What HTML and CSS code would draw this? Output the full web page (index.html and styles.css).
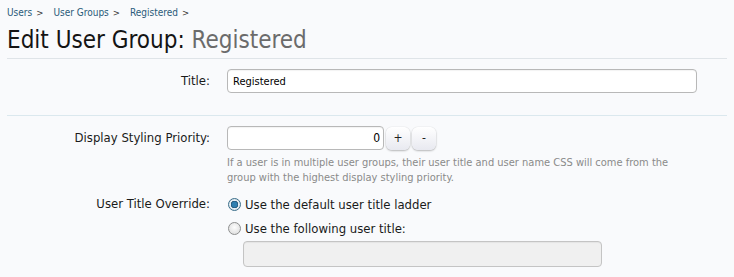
FILE: index.html
```html
<!DOCTYPE html>
<html>
<head>
<meta charset="utf-8">
<link rel="stylesheet" href="styles.css">
</head>
<body>
<div class="page">
  <nav class="crumbs">
    <a href="#">Users</a><span class="sep">&gt;</span>
    <a href="#">User Groups</a><span class="sep">&gt;</span>
    <a href="#">Registered</a><span class="sep">&gt;</span>
  </nav>
  <h1 class="title">Edit User Group: <em>Registered</em></h1>
  <form class="form">
    <div class="row row-title">
      <label class="lbl">Title:</label>
      <div class="ctrl"><input class="txt wide" type="text" value="Registered"></div>
    </div>
    <div class="row row-prio">
      <label class="lbl">Display Styling Priority:</label>
      <div class="ctrl">
        <div class="spin">
          <input class="txt num" type="text" value="0">
          <button type="button" class="sbtn">+</button>
          <button type="button" class="sbtn">-</button>
        </div>
        <p class="hint">If a user is in multiple user groups, their user title and user name CSS will come from the group with the highest display styling priority.</p>
      </div>
    </div>
    <div class="row row-ut">
      <label class="lbl">User Title Override:</label>
      <div class="ctrl">
        <label class="opt"><span class="radio on"></span>Use the default user title ladder</label>
        <label class="opt"><span class="radio"></span>Use the following user title:</label>
        <div class="sub"><input class="txt dis" type="text" disabled></div>
      </div>
    </div>
  </form>
</div>
</body>
</html>
```

FILE: styles.css
```css
html, body { margin: 0; padding: 0; }
body {
  background: #f9fafc;
  font-family: "DejaVu Sans Condensed", "DejaVu Sans", sans-serif;
  font-size: 13px;
  color: #141414;
}
.page { padding: 0 7px; }
.crumbs { height: 24px; display: flex; align-items: center; font-size: 10px; }
.crumbs a { color: #2b5a7a; text-decoration: none; }
.crumbs .sep { color: #333; margin: 0 10px 0 4px; font-size: 9.5px; }
.title {
  margin: 0; font-weight: normal; font-size: 24px; line-height: 32px;
  padding-bottom: 2px;
  border-bottom: 1px solid #dfe4e8;
  color: #141414;
}
.title em { font-style: normal; color: #6b6b6b; }
.form { padding-top: 10px; }
.row { display: grid; grid-template-columns: 203px 1fr; column-gap: 17px; }
.lbl { text-align: right; color: #1a1a1a; line-height: 24px; }
.row-title { padding-bottom: 22px; border-bottom: 1px solid #dbe8ee; }
.row-prio { padding-top: 10px; }
.row-ut { padding-top: 7px; }
.txt {
  box-sizing: border-box; height: 24px; border: 1px solid #b8b8b8; border-radius: 4px;
  background: #fff; font: inherit; font-size: 11px; color: #000; padding: 0 5px;
  box-shadow: inset 0 1px 1px rgba(0,0,0,0.05);
}
.wide { width: 470px; }
.spin { display: flex; align-items: center; gap: 1px; }
.num { width: 157px; text-align: right; padding-right: 3px; font-size: 12px; }
.sbtn {
  width: 24px; height: 23px; border: none; border-radius: 6px; font: inherit; font-size: 12px;
  background: linear-gradient(#ffffff, #e8e9f0); color: #222;
  box-shadow: 0 1px 2px rgba(0,0,0,0.25), 0 0 1px rgba(0,0,0,0.2);
  padding: 0; margin-left: 1px;
}
.hint { margin: 5px 0 0; font-size: 11px; line-height: 15px; color: #8a8a8a; width: 460px; }
.opt { display: flex; align-items: center; height: 24px; color: #1a1a1a; }
.radio {
  width: 11px; height: 11px; border-radius: 50%; border: 1px solid #8e8f8f;
  background: radial-gradient(circle at 50% 40%, #fdfdfd, #d9d9d9);
  margin: 0 4px 0 1px; box-sizing: content-box;
}
.radio.on { border-color: #3a6e8a; background: radial-gradient(circle at 50% 50%, #2f7fb0 0 2.5px, #1f4f70 3.5px, #e6eef4 4px, #cfd9e0); }
.sub { padding-left: 16px; margin-top: 1px; }
.dis { width: 359px; height: 26px; background: #f0f0f0; border-color: #c4c4c4; }
```
